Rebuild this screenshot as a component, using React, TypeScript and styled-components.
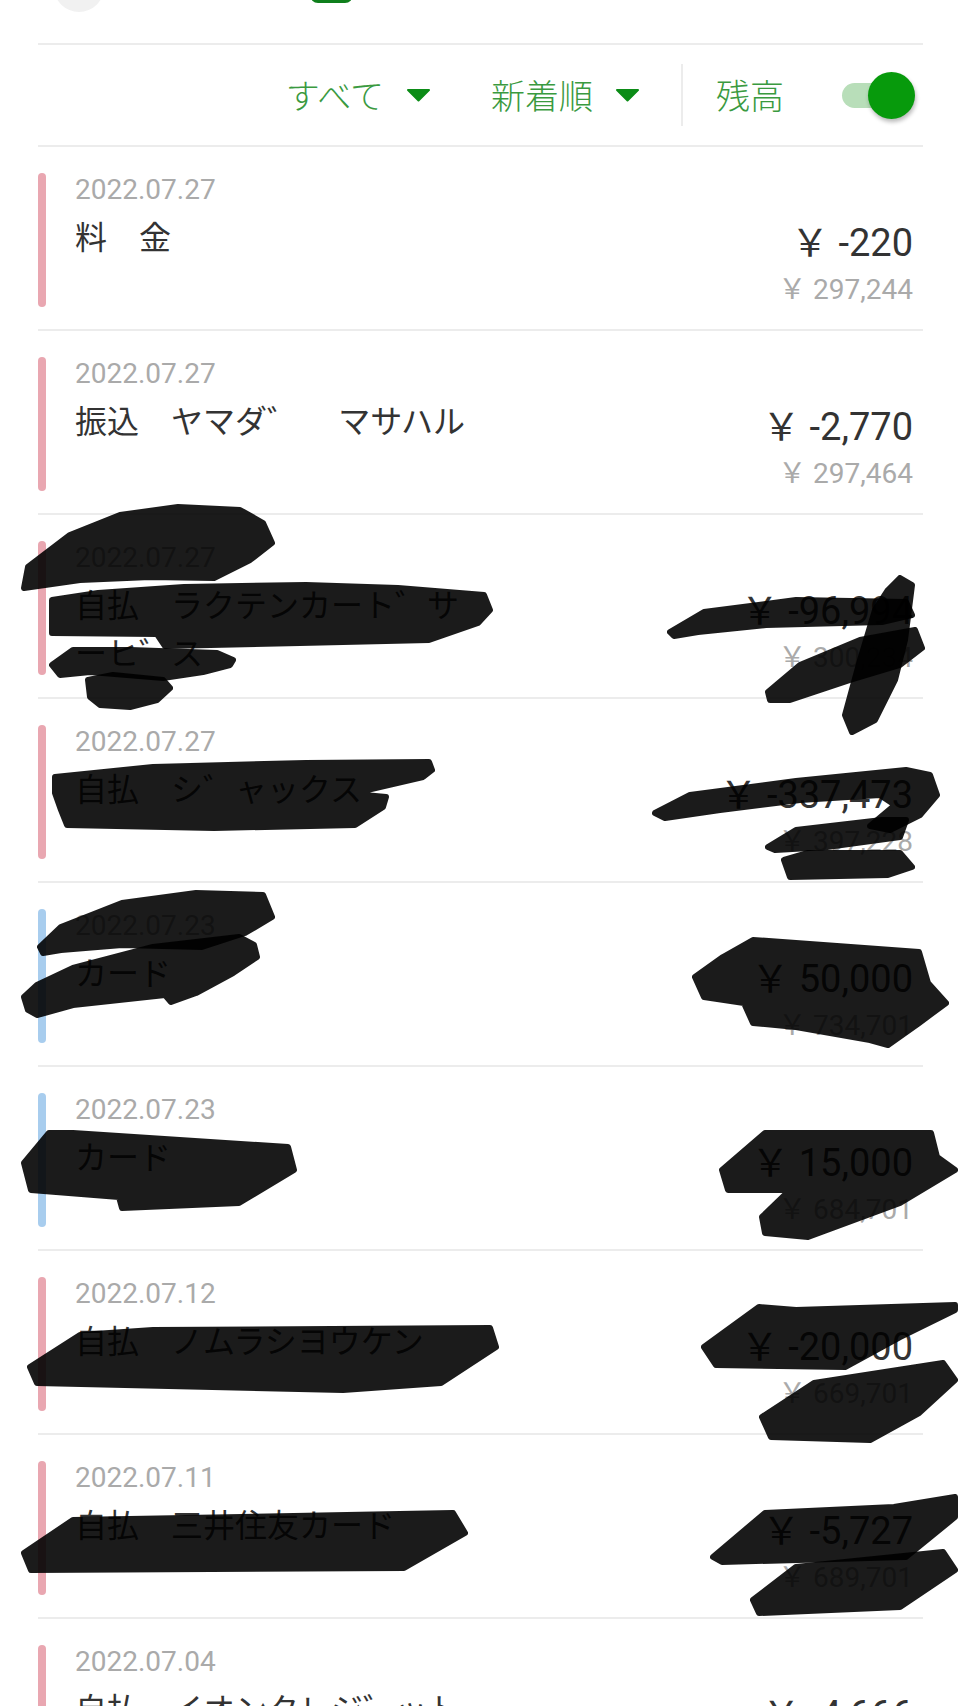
import styled, { createGlobalStyle } from "styled-components"

const GlobalStyle = createGlobalStyle`
	html,
	body {
		margin: 0;
		padding: 0;
		background: #ffffff;
	}
	body {
		font-family: Roboto, "Noto Sans CJK JP", sans-serif;
	}
`

type Entry = {
	date: string
	title: string
	amount: string
	balance: string
	kind: "out" | "in"
}

const entries: Entry[] = [
	{ date: "2022.07.27", title: "料　金", amount: "￥ -220", balance: "￥ 297,244", kind: "out" },
	{ date: "2022.07.27", title: "振込　ヤマダ゛ 　マサハル", amount: "￥ -2,770", balance: "￥ 297,464", kind: "out" },
	{ date: "2022.07.27", title: "自払　ラクテンカート゛サーヒ゛ス", amount: "￥ -96,994", balance: "￥ 300,234", kind: "out" },
	{ date: "2022.07.27", title: "自払　シ゛ャックス", amount: "￥ -337,473", balance: "￥ 397,228", kind: "out" },
	{ date: "2022.07.23", title: "カード", amount: "￥ 50,000", balance: "￥ 734,701", kind: "in" },
	{ date: "2022.07.23", title: "カード", amount: "￥ 15,000", balance: "￥ 684,701", kind: "in" },
	{ date: "2022.07.12", title: "自払　ノムラシヨウケン", amount: "￥ -20,000", balance: "￥ 669,701", kind: "out" },
	{ date: "2022.07.11", title: "自払　三井住友カード", amount: "￥ -5,727", balance: "￥ 689,701", kind: "out" },
	{ date: "2022.07.04", title: "自払　イオンクレジ゛ット", amount: "￥ -4,666", balance: "￥ 695,428", kind: "out" },
]

// marker strokes drawn over the list, in page coordinates
const marks: number[][] = [
	[28, 567, 70, 535, 120, 515, 178, 507, 240, 510, 263, 523, 272, 543, 250, 560, 214, 578, 150, 577, 80, 580, 24, 588],
	[52, 600, 98, 593, 184, 587, 306, 585, 398, 588, 484, 595, 490, 610, 478, 623, 429, 640, 300, 643, 165, 646, 157, 634, 52, 633],
	[52, 665, 73, 650, 130, 650, 217, 653, 233, 660, 230, 665, 203, 672, 163, 678, 90, 672, 60, 675],
	[88, 680, 113, 675, 163, 680, 170, 688, 157, 700, 130, 707, 100, 705, 90, 697],
	[670, 632, 704, 612, 796, 600, 906, 602, 912, 615, 882, 622, 766, 625, 698, 632, 674, 636],
	[900, 578, 912, 585, 905, 640, 895, 680, 875, 720, 852, 732, 845, 715, 860, 660, 875, 610, 888, 590],
	[768, 692, 800, 665, 860, 640, 915, 630, 922, 648, 900, 665, 850, 680, 790, 700, 770, 700],
	[55, 777, 153, 767, 306, 763, 429, 762, 432, 770, 423, 777, 367, 790, 343, 793, 386, 797, 383, 807, 355, 825, 214, 828, 67, 825, 61, 810, 55, 793],
	[655, 813, 690, 795, 796, 781, 906, 770, 930, 775, 937, 795, 920, 815, 890, 830, 870, 826, 895, 805, 880, 795, 800, 800, 720, 810, 665, 818],
	[768, 847, 796, 830, 882, 820, 906, 820, 900, 837, 827, 847, 775, 850],
	[784, 860, 808, 853, 900, 853, 912, 867, 888, 875, 790, 877],
	[40, 947, 61, 927, 122, 903, 196, 893, 263, 895, 272, 917, 245, 933, 202, 947, 122, 945, 61, 950, 43, 953],
	[24, 997, 37, 985, 73, 968, 153, 947, 239, 937, 254, 945, 257, 957, 233, 973, 196, 993, 171, 1002, 165, 995, 73, 1005, 37, 1015, 28, 1010],
	[695, 977, 723, 957, 753, 940, 796, 943, 919, 952, 928, 983, 946, 1003, 919, 1023, 888, 1045, 870, 1040, 796, 1027, 753, 1023, 744, 1003, 704, 997],
	[24, 1163, 49, 1133, 73, 1133, 288, 1147, 294, 1170, 239, 1203, 122, 1208, 119, 1197, 31, 1190],
	[722, 1170, 765, 1133, 931, 1133, 937, 1157, 955, 1170, 900, 1203, 808, 1237, 765, 1233, 762, 1217, 790, 1190, 728, 1190],
	[30, 1367, 80, 1335, 153, 1330, 490, 1328, 496, 1347, 441, 1383, 343, 1390, 37, 1383],
	[704, 1347, 759, 1307, 796, 1310, 955, 1305, 955, 1310, 900, 1337, 845, 1367, 716, 1365],
	[762, 1417, 814, 1383, 943, 1363, 955, 1380, 919, 1413, 870, 1440, 771, 1437],
	[24, 1553, 73, 1520, 453, 1513, 465, 1533, 404, 1568, 31, 1570],
	[713, 1557, 765, 1513, 894, 1507, 955, 1497, 955, 1517, 906, 1557, 722, 1562],
	[753, 1600, 796, 1567, 943, 1552, 955, 1570, 900, 1607, 759, 1613],
]

function toPath(p: number[]) {
	let d = `M${p[0]} ${p[1]}`
	for (let i = 2; i < p.length; i += 2) d += ` L${p[i]} ${p[i + 1]}`
	return d + " Z"
}

function Caret() {
	return (
		<svg width="25" height="14" viewBox="0 0 25 14">
			<path
				d="M2 2 H23 L12.5 12.5 Z"
				fill="#0c8c17"
				stroke="#0c8c17"
				strokeWidth="2"
				strokeLinejoin="round"
			/>
		</svg>
	)
}

export default function App() {
	return (
		<Page>
			<GlobalStyle />
			<TopBar>
				<Avatar />
				<AppIcon />
			</TopBar>

			<FilterBar>
				<FilterButton>
					<Label>すべて</Label>
					<Caret />
				</FilterButton>
				<FilterButton $gap={60}>
					<Label>新着順</Label>
					<Caret />
				</FilterButton>
				<VDivider />
				<BalanceLabel>残高</BalanceLabel>
				<Toggle>
					<Track />
					<Knob />
				</Toggle>
			</FilterBar>

			{entries.map((e, i) => (
				<Row key={i}>
					<Bar $kind={e.kind} />
					<Body>
						<Left>
							<DateText>{e.date}</DateText>
							<Title>{e.title}</Title>
						</Left>
						<Right>
							<Amount>{e.amount}</Amount>
							<Balance>{e.balance}</Balance>
						</Right>
					</Body>
				</Row>
			))}

			<Marks viewBox="0 0 960 1706">
				{marks.map((m, i) => (
					<path key={i} d={toPath(m)} />
				))}
			</Marks>
		</Page>
	)
}

const Page = styled.div`
	position: relative;
	width: 960px;
	height: 1706px;
	overflow: hidden;
	padding: 0 37px 0 38px;
	box-sizing: border-box;
	background: #ffffff;
`

const TopBar = styled.div`
	height: 43px;
	display: flex;
	align-items: flex-end;
	overflow: hidden;
	border-bottom: 2px solid #ececec;
`

const Avatar = styled.div`
	flex: none;
	width: 50px;
	height: 50px;
	margin: 0 0 31px 16px;
	border-radius: 50%;
	background: #f1f1f1;
`

const AppIcon = styled.div`
	flex: none;
	width: 37px;
	height: 34px;
	margin: 0 0 40px 206px;
	border: 3px solid #0f7f1c;
	border-radius: 8px;
	background: #2bb13c;
`

const FilterBar = styled.div`
	height: 100px;
	display: flex;
	align-items: center;
	justify-content: flex-end;
	padding-right: 8px;
	border-bottom: 2px solid #ececec;
`

const FilterButton = styled.div<{ $gap?: number }>`
	display: flex;
	align-items: center;
	gap: 22px;
	margin-left: ${(p) => (p.$gap ? `${p.$gap}px` : "0")};
`

const Label = styled.span`
	font-family: "Noto Sans CJK JP", sans-serif;
	font-size: 34px;
	font-weight: 300;
	line-height: 46px;
	color: #3a9a3f;
`

const VDivider = styled.div`
	width: 2px;
	height: 62px;
	margin-left: 41px;
	background: #ececec;
`

const BalanceLabel = styled(Label)`
	margin-left: 33px;
`

const Toggle = styled.div`
	position: relative;
	width: 73px;
	height: 47px;
	margin-left: 58px;
`

const Track = styled.div`
	position: absolute;
	left: 0;
	top: 11px;
	width: 60px;
	height: 25px;
	border-radius: 13px;
	background: #b8deb9;
`

const Knob = styled.div`
	position: absolute;
	right: 0;
	top: 0;
	width: 47px;
	height: 47px;
	border-radius: 50%;
	background: #079a0c;
	box-shadow: 1px 3px 4px rgba(0, 0, 0, 0.28);
`

const Row = styled.div`
	height: 184px;
	box-sizing: border-box;
	display: flex;
	padding: 26px 0 22px;
	border-bottom: 2px solid #ececec;
`

const Bar = styled.div<{ $kind: "out" | "in" }>`
	flex: none;
	width: 8px;
	border-radius: 4px;
	background: ${(p) => (p.$kind === "in" ? "#a8cdee" : "#e9a7b1")};
`

const Body = styled.div`
	flex: 1;
	display: flex;
	margin-left: 29px;
	padding-right: 10px;
`

const Left = styled.div`
	display: flex;
	flex-direction: column;
`

const DateText = styled.div`
	font-family: Roboto, sans-serif;
	font-size: 28px;
	line-height: 34px;
	color: #aaaaaa;
`

const Title = styled.div`
	margin-top: 4px;
	width: 400px;
	font-family: "Noto Sans CJK JP", sans-serif;
	font-size: 32px;
	line-height: 48px;
	color: #333333;
	line-break: anywhere;
`

const Right = styled.div`
	margin-left: auto;
	display: flex;
	flex-direction: column;
	align-items: flex-end;
	padding-top: 47px;
`

const Amount = styled.div`
	font-family: Roboto, "Noto Sans CJK JP", sans-serif;
	font-size: 38px;
	line-height: 46px;
	color: #333333;
	white-space: nowrap;
`

const Balance = styled.div`
	margin-top: 7px;
	font-family: Roboto, "Noto Sans CJK JP", sans-serif;
	font-size: 28px;
	line-height: 34px;
	color: #aaaaaa;
	white-space: nowrap;
`

const Marks = styled.svg`
	position: absolute;
	left: 0;
	top: 0;
	width: 960px;
	height: 1706px;
	pointer-events: none;

	path {
		fill: #000000;
		stroke: #000000;
		stroke-width: 6px;
		stroke-linejoin: round;
		opacity: 0.89;
	}
`
